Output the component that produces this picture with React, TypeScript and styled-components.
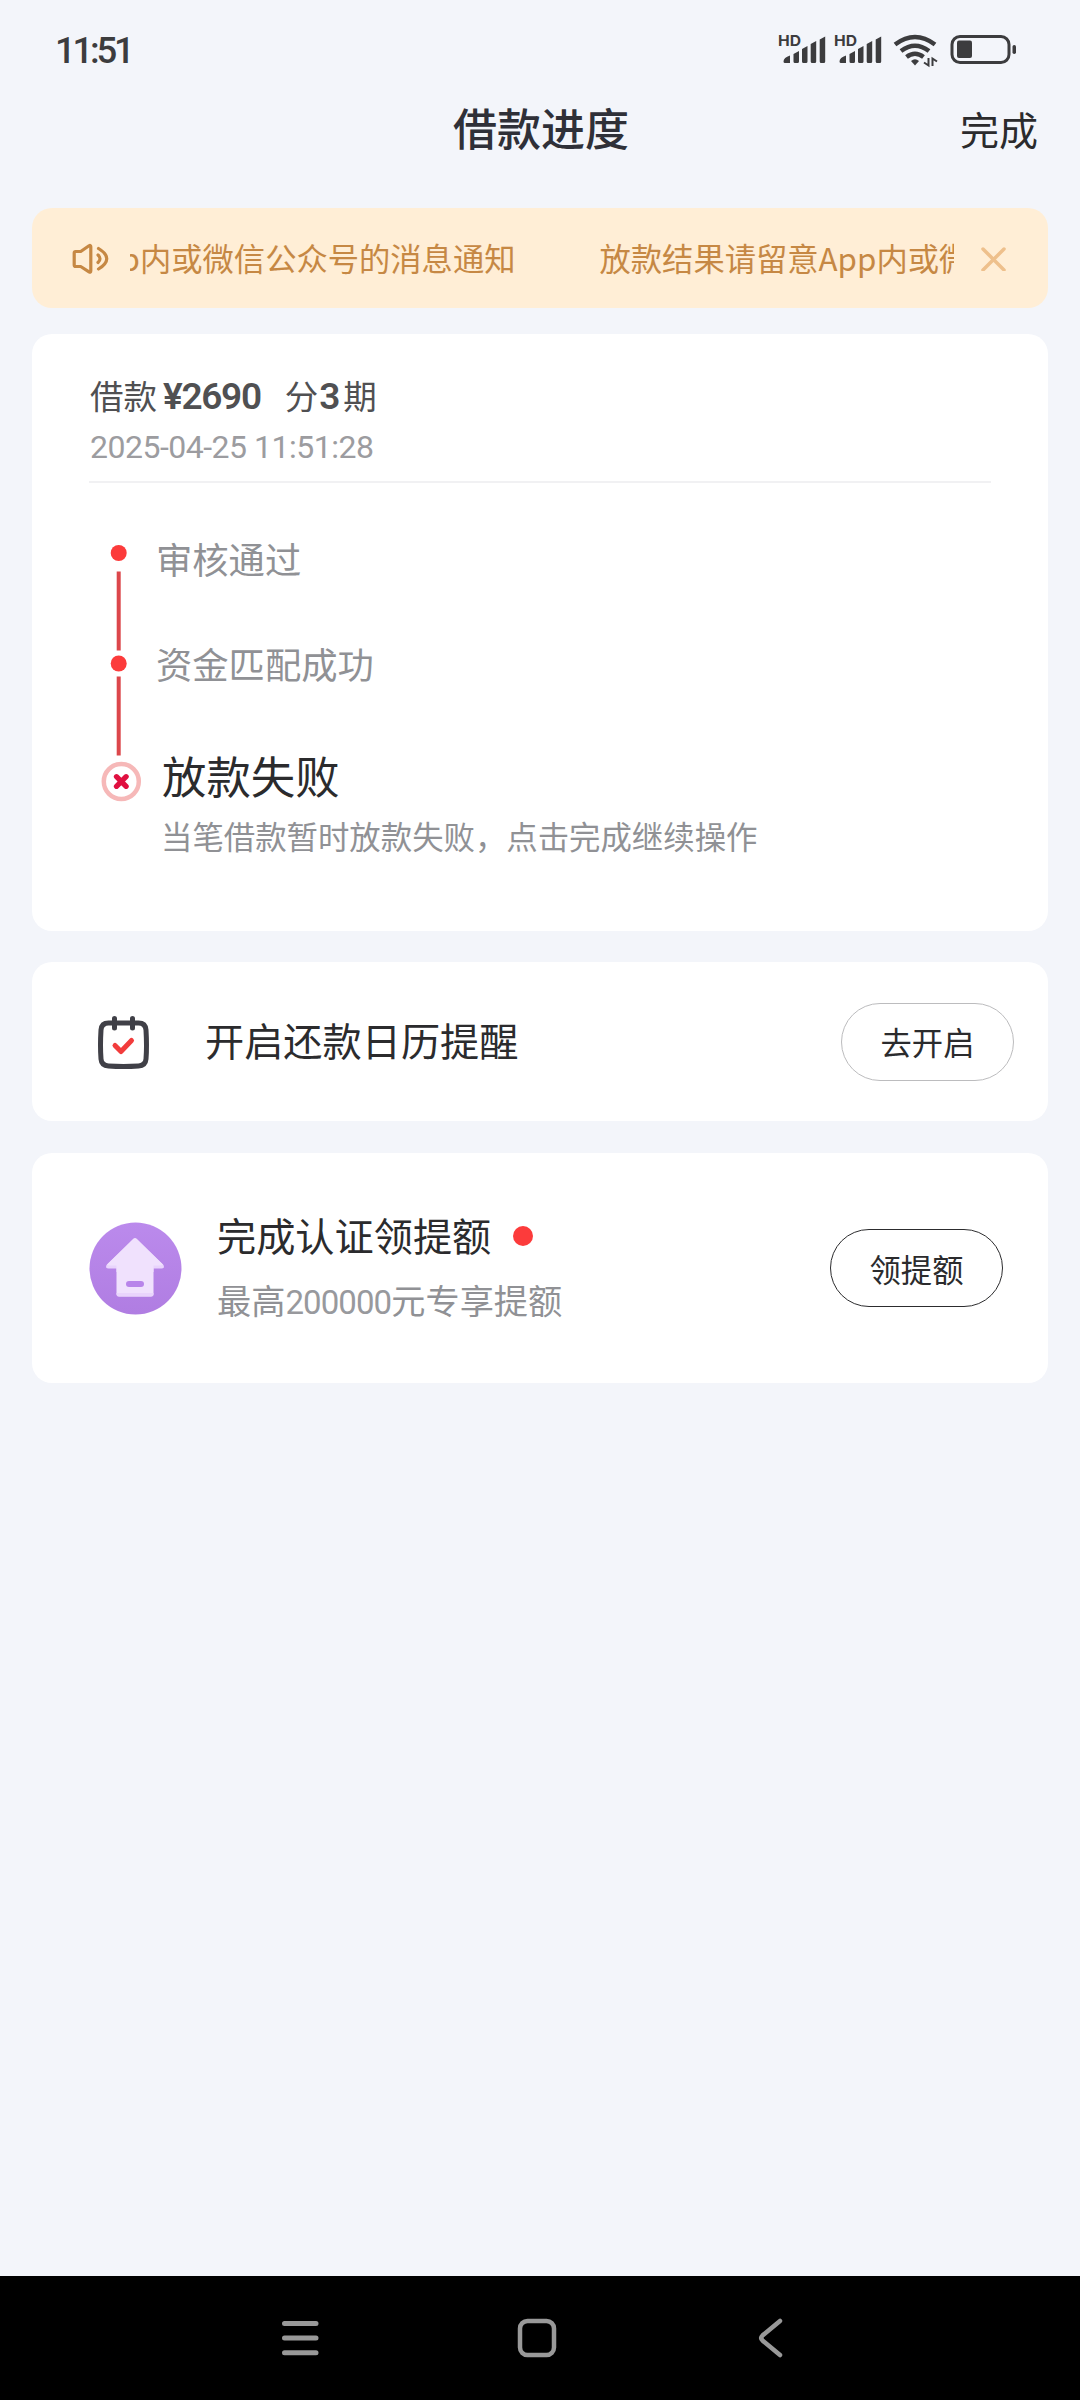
import React from "react";
import styled, { createGlobalStyle } from "styled-components";

const Global = createGlobalStyle`
  * { box-sizing: border-box; }
  body { margin: 0; background: #f3f5fa; }
`;

const Screen = styled.div`
  width: 1080px;
  height: 2400px;
  display: flex;
  flex-direction: column;
  background: #f3f5fa;
  color: #2b2b2d;
  font-family: "Noto Sans CJK SC", sans-serif;
  white-space: nowrap;
  overflow: hidden;
`;

const StatusBar = styled.div`
  height: 100px;
  padding: 0 64px 0 55px;
  display: flex;
  align-items: center;
  justify-content: space-between;
  flex: none;
`;

const Clock = styled.div`
  font-family: Roboto, sans-serif;
  font-weight: 500;
  font-size: 36.5px;
  letter-spacing: -3.2px;
  color: #3c3c3e;
`;

const Header = styled.header`
  height: 108px;
  flex: none;
  display: grid;
  grid-template-columns: 1fr auto 1fr;
  padding: 0 42px 0 44px;
  line-height: 60px;
  margin-top: -2px;
  margin-bottom: 2px;
`;

const Title = styled.h1`
  margin: 0;
  font-size: 44px;
  line-height: 58px;
  font-weight: 500;
  color: #2f3038;
`;

const Done = styled.div`
  font-size: 39px;
  text-align: right;
`;

const Content = styled.main`
  flex: 1;
  padding: 0 32px;
`;

const Notice = styled.div`
  height: 100px;
  margin-bottom: 26px;
  padding: 0 42px 0 38px;
  border-radius: 20px;
  background: #ffeed6;
  display: flex;
  align-items: center;
`;

const Marquee = styled.div`
  width: 824px;
  margin: 0 27px 0 20px;
  overflow: hidden;
  display: flex;
  justify-content: flex-end;
  font-size: 31.3px;
  line-height: 46px;
  color: #c68844;
`;

const Track = styled.div`
  display: flex;
  gap: 84px;
  margin-right: -298px;
`;

const Card = styled.section<{ $h: number; $gap?: number }>`
  height: ${(p) => p.$h}px;
  margin-bottom: ${(p) => p.$gap ?? 0}px;
  border-radius: 20px;
  background: #fff;
`;

const LoanHead = styled.div`
  margin: 0 57px;
  height: 149px;
  padding: 37px 0 0 1px;
  border-bottom: 2px solid #f1f1f3;
`;

const Amount = styled.div`
  display: flex;
  align-items: baseline;
  font-size: 33.5px;
  line-height: 48px;
  color: #505052;
`;

const Num = styled.span<{ $l?: number; $r?: number }>`
  font-family: Roboto, sans-serif;
  font-weight: 600;
  font-size: 37px;
  letter-spacing: -1.3px;
  margin: 0 ${(p) => p.$r ?? 0}px 0 ${(p) => p.$l ?? 0}px;
`;

const Stamp = styled.div`
  font-family: Roboto, sans-serif;
  font-weight: 400;
  font-size: 32px;
  line-height: 44px;
  margin-top: 4px;
  letter-spacing: -0.5px;
  color: #9c9ca0;
`;

const Timeline = styled.div`
  display: flex;
  padding: 50px 0 0 61px;
`;

const Steps = styled.div`
  margin-left: 13px;
  display: flex;
  flex-direction: column;
`;

const Step = styled.div<{ $h: number }>`
  height: ${(p) => p.$h}px;
  font-size: 36.3px;
  line-height: 50px;
  color: #909195;
`;

const StepFail = styled.div`
  padding-left: 6px;
  font-size: 44.4px;
  line-height: 64px;
  color: #2b2b2d;
`;

const StepHint = styled.div`
  padding-left: 5px;
  font-size: 31.4px;
  line-height: 48px;
  margin-top: 5px;
  color: #909195;
`;

const Row = styled.div<{ $l: number; $r: number }>`
  height: 100%;
  padding: 0 ${(p) => p.$r}px 0 ${(p) => p.$l}px;
  display: flex;
  align-items: center;
`;

const RowText = styled.div<{ $l: number; $lift?: number }>`
  flex: 1;
  margin-left: ${(p) => p.$l}px;
  padding-bottom: ${(p) => p.$lift ?? 0}px;
`;

const RowTitle = styled.div`
  display: flex;
  align-items: center;
  gap: 22px;
  font-size: 39.2px;
  line-height: 58px;
`;

const RowSub = styled.div`
  margin-top: 7px;
  font-size: 34.2px;
  line-height: 58px;
  color: #909195;
`;

const SubNum = styled.span`
  font-family: Roboto, sans-serif;
  font-weight: 400;
  font-size: 33px;
  letter-spacing: -0.9px;
  color: #98999d;
`;

const Dot = styled.i`
  width: 20px;
  height: 20px;
  margin-top: 4px;
  border-radius: 50%;
  background: #fc3b3b;
`;

const Pill = styled.button<{ $line: string }>`
  width: 173px;
  height: 78px;
  padding: 0;
  border: 1.5px solid ${(p) => p.$line};
  border-radius: 39px;
  background: #fff;
  font-family: inherit;
  font-size: 31.3px;
  color: #2b2b2d;
`;

const NavBar = styled.nav`
  height: 124px;
  flex: none;
  background: #000;
  display: flex;
  align-items: center;
  justify-content: space-between;
  padding: 0 297px 0 280px;
`;

const StatusIcons = () => (
  <svg width="240" height="40" viewBox="776 30 240 40" fill="#3c3c3e">
    {[0, 56].map((dx) => (
      <g key={dx} transform={`translate(${dx} 0)`}>
        <text x="778" y="45.5" fontFamily="Inter, sans-serif" fontWeight="700" fontSize="14.5" textLength="23" lengthAdjust="spacingAndGlyphs">HD</text>
        <path d="M783.5 61.5q0-4 6.5-6v7.5h-5q-1.500 0-1.500-1.500zM793.500 54l5.500-3v10.500q0 1.500-1.500 1.500h-2.500q-1.500 0-1.500-1.500zM802 49l5.500-3v15.500q0 1.500-1.500 1.500h-2.500q-1.500 0-1.500-1.500zM810.700 44l5.500-3v20.500q0 1.500-1.500 1.500h-2.500q-1.500 0-1.500-1.500zM819.700 39.500l5.500-3v25q0 1.500-1.500 1.500h-2.500q-1.500 0-1.500-1.500z" />
      </g>
    ))}
    <g fill="none" stroke="#3c3c3e" strokeWidth="4.500">
      <path d="M895 44.500q20-15 40 0M901 51q14-10.500 28 0M906.500 57q8.500-6.500 17 0" />
    </g>
    <path d="M911 61q4-3.500 8 0l-4 4.500z" />
    <path d="M928.500 58v7.500l-4.500-3M932.500 66v-7.500l4.500 3" fill="none" stroke="#3c3c3e" strokeWidth="2" />
    <rect x="952" y="36.500" width="57" height="26" rx="8" fill="none" stroke="#3c3c3e" strokeWidth="3" />
    <rect x="957" y="40.500" width="15" height="17.500" rx="2" />
    <rect x="1012.500" y="45" width="3.500" height="9" rx="1.700" />
  </svg>
);

const Speaker = () => (
  <svg width="40" height="36" viewBox="0 0 40 36" fill="none" stroke="#c68844" strokeWidth="3.200" strokeLinecap="round" strokeLinejoin="round">
    <path d="M5.700 11.500h5l8.300-5.700q1.800-1 1.800 1v24q0 2-1.800 1l-8.300-5.300h-5q-1.500 0-1.500-1.500v-12q0-1.500 1.500-1.500z" />
    <path d="M28 15q4 3.700 0 7.500M28.500 8.500q16.500 10 0 20.500" />
  </svg>
);

const Close = () => (
  <svg width="25" height="25" viewBox="0 0 25 25" stroke="#eec08c" strokeWidth="3.500" strokeLinecap="round">
    <path d="M2 3L23 24M23 3L2 24" />
  </svg>
);

const Rail = () => (
  <svg width="50" height="270" viewBox="93 533 50 270">
    <path d="M118.700 571.500v79M118.700 676.500v79" stroke="#dc474b" strokeWidth="4" />
    <circle cx="118.700" cy="553" r="8" fill="#fc3b3b" />
    <circle cx="118.700" cy="663.500" r="8" fill="#fc3b3b" />
    <circle cx="121.300" cy="781.500" r="17.500" fill="#fff" stroke="#f6b8b8" strokeWidth="4.500" />
    <path d="M116.500 776.700l9.600 9.600M126.100 776.700l-9.600 9.600" stroke="#e01040" strokeWidth="5.300" strokeLinecap="round" />
  </svg>
);

const Calendar = () => (
  <svg width="54" height="58" viewBox="-0.500 -1.500 54 58" fill="none" strokeLinecap="round" strokeLinejoin="round">
    <path d="M12 8.500h30q7 0 7.500 7 1 16.500 0 29-.5 6.500-7.500 7-15 1-30 0-7-.5-7.500-7-1-13 0-29 .5-7 7.500-7z" stroke="#404047" strokeWidth="5" />
    <path d="M18 4v9.500M36 4v9.500" stroke="#404047" strokeWidth="5" />
    <path d="M18.500 31l6 6 10.500-11" stroke="#f23c3c" strokeWidth="5" />
  </svg>
);

const House = () => (
  <svg width="93" height="93" viewBox="0 0 93 93">
    <defs>
      <linearGradient id="orb" x1="0" y1="0" x2="0" y2="1">
        <stop offset="0" stopColor="#bb8aec" />
        <stop offset="1" stopColor="#b07de2" />
      </linearGradient>
    </defs>
    <circle cx="46.500" cy="46.500" r="46" fill="url(#orb)" />
    <path d="M27.500 38h37v34q0 2.500-2.500 2.500h-32q-2.500 0-2.500-2.500z" fill="#f0e1fd" />
    <path d="M44 18q2-2 4 0l26.500 25q1.500 3.500-2 3.500h-53q-3.500 0-2-3.500z" fill="#e9d4fc" />
    <path d="M44 17q2-2 4 0l26 25.500q-1 1-3 1h-50q-2 0-3-1z" fill="#f0e1fd" />
    <path d="M27.500 40h37v10h-37z" fill="#f0e1fd" />
    <path d="M27.500 71h37v1q0 2.500-2.500 2.500h-32q-2.500 0-2.500-2.500z" fill="#e9d4fc" />
    <rect x="37" y="59" width="18" height="6" rx="3" fill="#b884ea" />
  </svg>
);

const Menu = () => (
  <svg width="40" height="40" viewBox="0 0 40 40" stroke="#999" strokeWidth="5" strokeLinecap="round">
    <path d="M4.500 5.500h31.500M4.500 20h31.500M4.500 34.700h31.500" />
  </svg>
);

const HomeIcon = styled.svg`
  margin-right: 4px;
`;

const HomeKey = () => (
  <HomeIcon width="40" height="40" viewBox="0 0 40 40" fill="none" stroke="#999" strokeWidth="4.500">
    <rect x="3" y="3" width="34" height="34" rx="7.500" />
  </HomeIcon>
);

const BackKey = () => (
  <svg width="26" height="40" viewBox="0 0 26 40" fill="none" stroke="#999" strokeWidth="4.500" strokeLinecap="round">
    <path d="M23 3L5.500 17.500q-2.500 2.500 0 5L23 37" />
  </svg>
);

const message = "放款结果请留意App内或微信公众号的消息通知";

export default function App() {
  return (
    <Screen>
      <Global />
      <StatusBar>
        <Clock>11:51</Clock>
        <StatusIcons />
      </StatusBar>
      <Header>
        <span />
        <Title>借款进度</Title>
        <Done>完成</Done>
      </Header>
      <Content>
        <Notice>
          <Speaker />
          <Marquee>
            <Track>
              <span>{message}</span>
              <span>{message}</span>
            </Track>
          </Marquee>
          <Close />
        </Notice>
        <Card $h={597} $gap={31}>
          <LoanHead>
            <Amount>
              借款<Num $l={6} $r={24}>¥2690</Num>分<Num $l={1} $r={4}>3</Num>期
            </Amount>
            <Stamp>2025-04-25 11:51:28</Stamp>
          </LoanHead>
          <Timeline>
            <Rail />
            <Steps>
              <Step $h={105}>审核通过</Step>
              <Step $h={105}>资金匹配成功</Step>
              <StepFail>放款失败</StepFail>
              <StepHint>当笔借款暂时放款失败，点击完成继续操作</StepHint>
            </Steps>
          </Timeline>
        </Card>
        <Card $h={159} $gap={32}>
          <Row $l={64} $r={34}>
            <Calendar />
            <RowText $l={55} $lift={5}>
              <RowTitle>开启还款日历提醒</RowTitle>
            </RowText>
            <Pill $line="#bcbcbe">去开启</Pill>
          </Row>
        </Card>
        <Card $h={230}>
          <Row $l={57} $r={45}>
            <House />
            <RowText $l={35}>
              <RowTitle>
                完成认证领提额
                <Dot />
              </RowTitle>
              <RowSub>
                最高<SubNum>200000</SubNum>元专享提额
              </RowSub>
            </RowText>
            <Pill $line="#2c2c2e">领提额</Pill>
          </Row>
        </Card>
      </Content>
      <NavBar>
        <Menu />
        <HomeKey />
        <BackKey />
      </NavBar>
    </Screen>
  );
}
